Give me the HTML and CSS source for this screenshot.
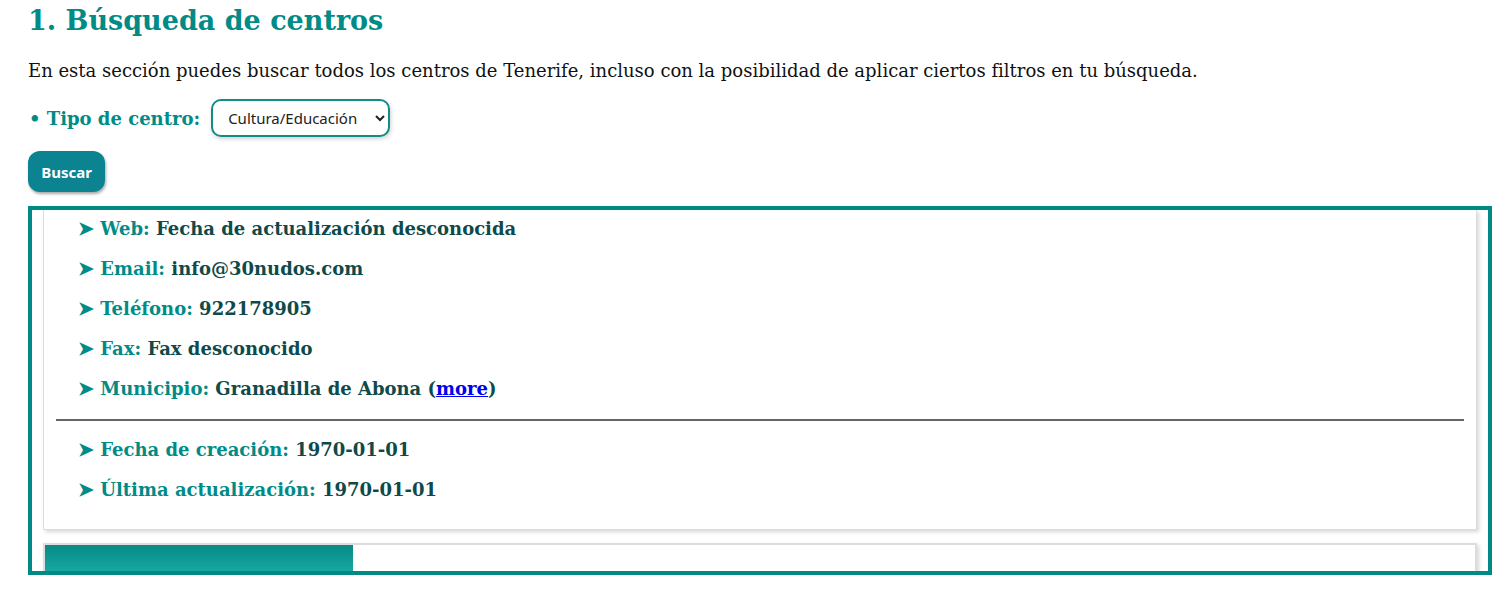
FILE: index.html
```html
<!DOCTYPE html>
<html lang="es">
<head>
<meta charset="utf-8">
<title>Búsqueda de centros</title>
<link rel="stylesheet" href="styles.css">
</head>
<body>
<main class="page">
  <h1 class="title">1. Búsqueda de centros</h1>
  <p class="intro">En esta sección puedes buscar todos los centros de Tenerife, incluso con la posibilidad de aplicar ciertos filtros en tu búsqueda.</p>
  <div class="filter">
    <span class="filter-label">• Tipo de centro:</span>
    <select class="filter-select">
      <option>Cultura/Educación</option>
      <option>Deportes</option>
      <option>Sanidad</option>
    </select>
  </div>
  <button class="btn" type="button">Buscar</button>

  <section class="results">
    <article class="card">
      <ul class="fields">
        <li><span class="lbl"><span class="arr">➤</span> Web:</span> <span class="val">Fecha de actualización desconocida</span></li>
        <li><span class="lbl"><span class="arr">➤</span> Email:</span> <span class="val">info@30nudos.com</span></li>
        <li><span class="lbl"><span class="arr">➤</span> Teléfono:</span> <span class="val">922178905</span></li>
        <li><span class="lbl"><span class="arr">➤</span> Fax:</span> <span class="val">Fax desconocido</span></li>
        <li><span class="lbl"><span class="arr">➤</span> Municipio:</span> <span class="val">Granadilla de Abona (<a href="#">more</a>)</span></li>
      </ul>
      <hr class="sep">
      <ul class="fields fields-dates">
        <li><span class="lbl"><span class="arr">➤</span> Fecha de creación:</span> <span class="val">1970-01-01</span></li>
        <li><span class="lbl"><span class="arr">➤</span> Última actualización:</span> <span class="val">1970-01-01</span></li>
      </ul>
    </article>
    <article class="card card-next">
      <div class="tab"></div>
    </article>
  </section>
</main>
</body>
</html>
```

FILE: styles.css
```css
html, body {
  margin: 0;
  padding: 0;
  background: #ffffff;
}

.page {
  padding: 4px 18px 0 28px;
  font-family: "DejaVu Serif", serif;
  color: #111;
}

.title {
  margin: 0;
  font-size: 27px;
  line-height: 33px;
  font-weight: bold;
  color: #008b87;
}

.intro {
  margin: 23px 0 0 0;
  font-size: 18px;
  line-height: 21px;
  color: #111;
}

.filter {
  margin-top: 18px;
  display: flex;
  align-items: center;
  gap: 11px;
  height: 38px;
}

.filter-label {
  font-size: 18px;
  font-weight: bold;
  color: #008b87;
  padding-left: 1px;
}

.filter-select {
  height: 38px;
  width: 179px;
  padding: 0 8px 0 11px;
  border: 2px solid #128c88;
  border-radius: 10px;
  background: #fff;
  font-family: "Noto Sans", sans-serif;
  font-size: 15px;
  color: #222;
  box-shadow: 1px 2px 4px rgba(0, 0, 0, 0.18);
}

.btn {
  display: block;
  margin-top: 14px;
  height: 41px;
  width: 77px;
  padding: 0;
  border: none;
  border-radius: 12px;
  background: #0b8391;
  color: #fff;
  font-family: "Noto Sans", sans-serif;
  font-weight: bold;
  font-size: 15px;
  box-shadow: 1px 2px 3px rgba(0, 0, 0, 0.35);
  cursor: pointer;
}

.results {
  margin-top: 14px;
  height: 361px;
  border: 4px solid #008985;
  overflow: hidden;
  display: flex;
  flex-direction: column;
  gap: 13px;
}

.card {
  flex: none;
  margin: 0 11px;
  background: #fff;
  border: 1px solid #dcdcdc;
  border-top: none;
  box-shadow: 2px 2px 4px rgba(0, 0, 0, 0.16);
}

.fields {
  list-style: none;
  margin: 0;
  padding: 7px 0 0 34px;
  display: flex;
  flex-direction: column;
  gap: 16px;
}

.fields li {
  font-size: 18px;
  line-height: 24px;
  height: 24px;
  font-weight: bold;
}

.fields-dates {
  padding-top: 17px;
  padding-bottom: 27px;
}

.arr {
  font-size: 19px;
  line-height: 0;
}

.lbl {
  color: #008b87;
}

.val {
  color: #0f4a4a;
}

.val a {
  color: #0000ee;
  text-decoration: underline;
}

.sep {
  margin: 18px 12px 0 12px;
  border: none;
  height: 2px;
  background: #666;
}

.card-next {
  border: 2px solid #dddddd;
  border-bottom: none;
  height: 30px;
  padding: 0;
}

.tab {
  width: 308px;
  height: 30px;
  background: linear-gradient(to bottom, #078a86, #1aaca6);
}
```
